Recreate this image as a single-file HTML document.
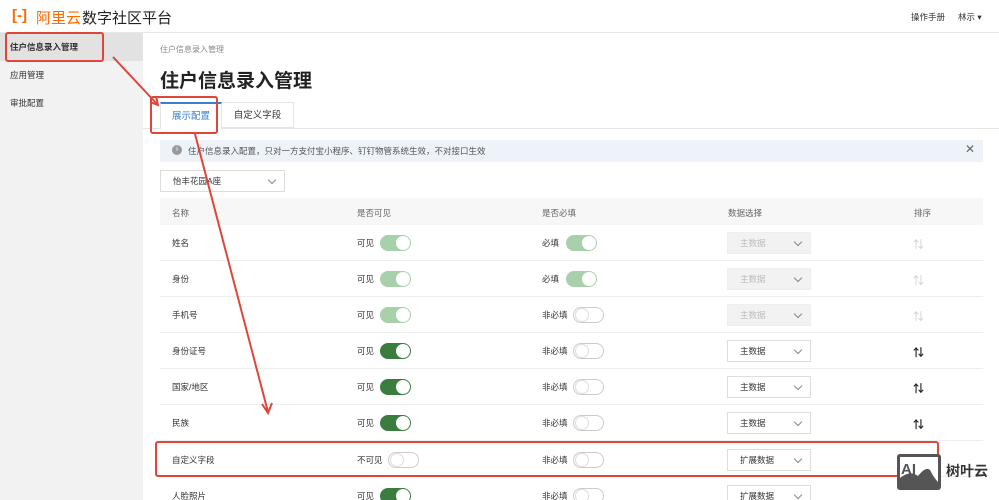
<!DOCTYPE html>
<html><head><meta charset="utf-8"><style>
*{box-sizing:border-box;margin:0;padding:0}
html,body{width:999px;height:500px;overflow:hidden}
body{background:#fff;font-family:"Liberation Sans","Noto Sans CJK SC",sans-serif;color:#333;position:relative;font-size:9px}
.hdr{position:absolute;left:0;top:0;width:999px;height:33px;border-bottom:1px solid #e8e8e8;background:#fff}
.side{position:absolute;left:0;top:33px;width:143px;height:467px;background:#f2f2f2}
.side div{height:28px;line-height:28px;padding-left:10px;font-size:8.5px;color:#333}
.abs{position:absolute}
.tog{position:absolute;width:31px;height:16px;border-radius:8px}
.tog i{position:absolute;top:1px;width:14px;height:14px;border-radius:50%;background:#fff}
.on{background:#3a7d3e}.on i{right:1px}
.lon{background:#a8d1ab}.lon i{right:1px}
.off{background:#fff;border:1px solid #ccc}.off i{left:1px;top:0;border:1px solid #ddd}
.sel{position:absolute;width:84px;height:22px;border:1px solid #ddd;left:727px;font-size:8.5px;line-height:20px;padding-left:12px;background:#fff}
.sel.dis{background:#f2f2f2;color:#bbb;border-color:#eee}
.sel:after{content:"";position:absolute;right:9px;top:6px;width:5px;height:5px;border-right:1px solid #888;border-bottom:1px solid #888;transform:rotate(45deg)}
.row{position:absolute;left:160px;width:823px;height:36px;border-bottom:1px solid #eee}
.t{position:absolute;font-size:8.5px}
.red{position:absolute;border:2px solid #e0453a;border-radius:3px}
</style></head><body>
<div class="hdr">
<div class="abs" style="left:12px;top:7px;color:#ff6a00;font-size:15px;font-weight:bold">[-]</div>
<div class="abs" style="left:36px;top:7px;color:#ff6a00;font-size:15px">阿里云</div>
<div class="abs" style="left:82px;top:7px;font-size:15px;color:#222">数字社区平台</div>
<div class="abs" style="left:911px;top:11px;font-size:8.5px">操作手册</div>
<div class="abs" style="left:958px;top:11px;font-size:8.5px">林示 ▾</div>
</div>
<div class="side">
<div style="background:#e2e2e2;font-weight:bold">住户信息录入管理</div>
<div>应用管理</div><div>审批配置</div>
</div>
<div class="abs" style="left:160px;top:44px;font-size:8px;color:#888">住户信息录入管理</div>
<div class="abs" style="left:160px;top:66px;font-size:19px;font-weight:bold;color:#222">住户信息录入管理</div>
<div class="abs" style="left:143px;top:128px;width:856px;border-top:1px solid #e5e5e5"></div>
<div class="abs" style="left:160px;top:102px;width:62px;height:27px;border:1px solid #e5e5e5;border-top:2px solid #3a7fd0;border-bottom:none;background:#fff;color:#3a7fd0;font-size:9.5px;text-align:center;line-height:25px">展示配置</div>
<div class="abs" style="left:222px;top:102px;width:72px;height:26px;border:1px solid #e5e5e5;border-left:none;font-size:9.5px;text-align:center;line-height:26px">自定义字段</div>
<div class="abs" style="left:160px;top:140px;width:823px;height:22px;background:#edf3f9"></div>
<div class="abs" style="left:172px;top:145px;width:10px;height:10px;border-radius:50%;background:#999;color:#fff;font-size:7px;text-align:center;line-height:10px">i</div>
<div class="abs" style="left:188px;top:145px;font-size:8.5px;color:#555">住户信息录入配置，只对一方支付宝小程序、钉钉物管系统生效，不对接口生效</div>
<div class="abs" style="left:965px;top:142px;font-size:12px;color:#666">✕</div>
<div class="sel" style="left:160px;top:170px;width:125px">怡丰花园A座</div>
<div class="abs" style="left:160px;top:198px;width:823px;height:27px;background:#f7f7f7"></div>
<div class="t" style="left:172px;top:207px;color:#666">名称</div>
<div class="t" style="left:357px;top:207px;color:#666">是否可见</div>
<div class="t" style="left:542px;top:207px;color:#666">是否必填</div>
<div class="t" style="left:728px;top:207px;color:#666">数据选择</div>
<div class="t" style="left:914px;top:207px;color:#666">排序</div>

<div class="row" style="top:225px"></div><div class="row" style="top:261px"></div><div class="row" style="top:297px"></div><div class="row" style="top:333px"></div><div class="row" style="top:369px"></div><div class="row" style="top:405px"></div><div class="row" style="top:441px"></div>

<div class="t" style="left:172px;top:237px">姓名</div>
<div class="t" style="left:357px;top:237px">可见</div><div class="tog lon" style="left:380px;top:235px"><i></i></div>
<div class="t" style="left:542px;top:237px">必填</div><div class="tog lon" style="left:566px;top:235px"><i></i></div>
<div class="sel dis" style="top:232px">主数据</div><div class="t" style="left:913px;top:236px;color:#ccc;font-size:11px">⇅</div>

<div class="t" style="left:172px;top:273px">身份</div>
<div class="t" style="left:357px;top:273px">可见</div><div class="tog lon" style="left:380px;top:271px"><i></i></div>
<div class="t" style="left:542px;top:273px">必填</div><div class="tog lon" style="left:566px;top:271px"><i></i></div>
<div class="sel dis" style="top:268px">主数据</div><div class="t" style="left:913px;top:272px;color:#ccc;font-size:11px">⇅</div>

<div class="t" style="left:172px;top:309px">手机号</div>
<div class="t" style="left:357px;top:309px">可见</div><div class="tog lon" style="left:380px;top:307px"><i></i></div>
<div class="t" style="left:542px;top:309px">非必填</div><div class="tog off" style="left:573px;top:307px"><i></i></div>
<div class="sel dis" style="top:304px">主数据</div><div class="t" style="left:913px;top:308px;color:#ccc;font-size:11px">⇅</div>

<div class="t" style="left:172px;top:345px">身份证号</div>
<div class="t" style="left:357px;top:345px">可见</div><div class="tog on" style="left:380px;top:343px"><i></i></div>
<div class="t" style="left:542px;top:345px">非必填</div><div class="tog off" style="left:573px;top:343px"><i></i></div>
<div class="sel" style="top:340px">主数据</div><div class="t" style="left:913px;top:344px;color:#222;font-size:11px;font-weight:bold">⇅</div>

<div class="t" style="left:172px;top:381px">国家/地区</div>
<div class="t" style="left:357px;top:381px">可见</div><div class="tog on" style="left:380px;top:379px"><i></i></div>
<div class="t" style="left:542px;top:381px">非必填</div><div class="tog off" style="left:573px;top:379px"><i></i></div>
<div class="sel" style="top:376px">主数据</div><div class="t" style="left:913px;top:380px;color:#222;font-size:11px;font-weight:bold">⇅</div>

<div class="t" style="left:172px;top:417px">民族</div>
<div class="t" style="left:357px;top:417px">可见</div><div class="tog on" style="left:380px;top:415px"><i></i></div>
<div class="t" style="left:542px;top:417px">非必填</div><div class="tog off" style="left:573px;top:415px"><i></i></div>
<div class="sel" style="top:412px">主数据</div><div class="t" style="left:913px;top:416px;color:#222;font-size:11px;font-weight:bold">⇅</div>

<div class="t" style="left:172px;top:454px">自定义字段</div>
<div class="t" style="left:357px;top:454px">不可见</div><div class="tog off" style="left:388px;top:452px"><i></i></div>
<div class="t" style="left:542px;top:454px">非必填</div><div class="tog off" style="left:573px;top:452px"><i></i></div>
<div class="sel" style="top:449px">扩展数据</div>

<div class="t" style="left:172px;top:490px">人脸照片</div>
<div class="t" style="left:357px;top:490px">可见</div><div class="tog on" style="left:380px;top:488px"><i></i></div>
<div class="t" style="left:542px;top:490px">非必填</div><div class="tog off" style="left:573px;top:488px"><i></i></div>
<div class="sel" style="top:485px">扩展数据</div>

<div class="red" style="left:5px;top:32px;width:99px;height:30px"></div>
<div class="red" style="left:150px;top:96px;width:68px;height:38px"></div>
<div class="red" style="left:155px;top:441px;width:784px;height:36px"></div>
<svg class="abs" style="left:0;top:0" width="999" height="500">
<g stroke="#e0453a" stroke-width="2" fill="none">
<line x1="113" y1="57" x2="157" y2="104"/><polyline points="150,102 158,105 156,96"/>
<line x1="195" y1="134" x2="268" y2="412"/><polyline points="262,404 268,413 272,403"/>
</g>
<rect x="897" y="454" width="44" height="36" rx="3" fill="#555"/>
<rect x="900" y="457" width="38" height="30" fill="#fff"/>
<path d="M900 487 L900 478 Q910 470 918 476 Q926 466 930 470 Q934 478 938 482 L938 487 Z" fill="#555"/>
<text x="901" y="474" font-family="Liberation Sans" font-weight="bold" font-size="15" fill="#555">AI</text>
</svg>
<div class="abs" style="left:946px;top:461px;font-size:14px;color:#333;font-weight:bold">树叶云</div>
</body></html>
